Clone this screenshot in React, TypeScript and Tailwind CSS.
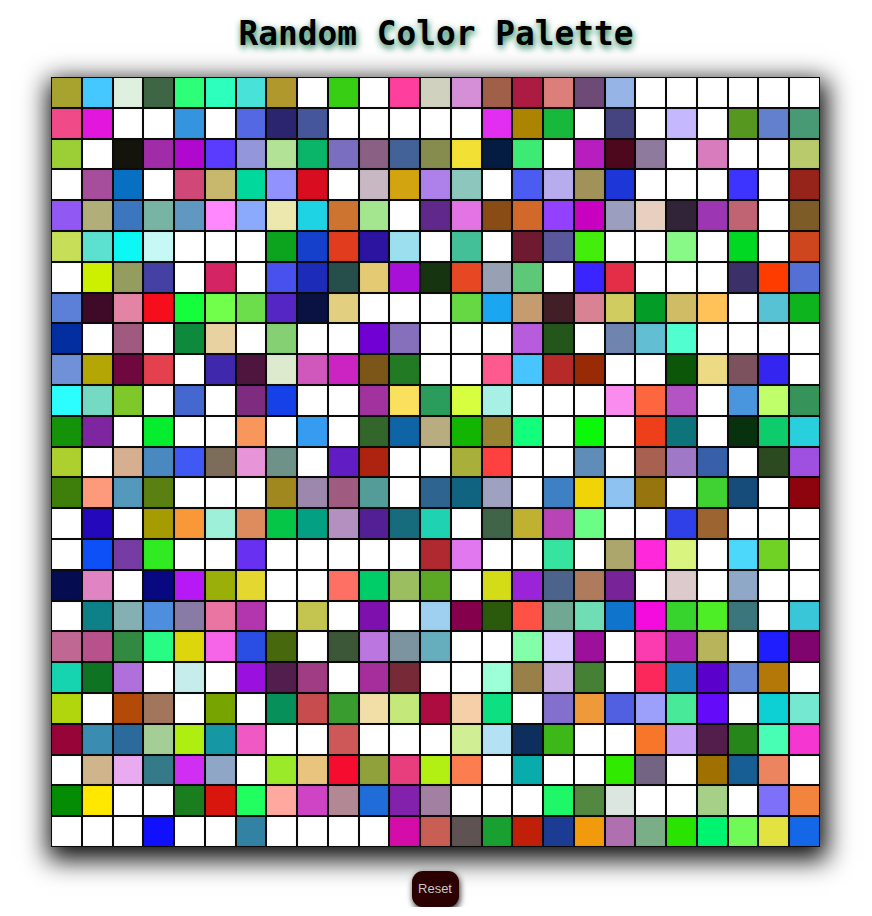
const W = '#ffffff';

const rows: string[][] = [
  ['#a8a32e', '#45c8ff', '#def0de', '#3f6644', '#2eff78', '#2dffbc', '#49e2d8', '#b0982c', W, '#38ce14', W, '#ff3f9e', '#d0d2bf', '#d48fd6', '#a05f48', '#ac1b42', '#dc7e7a', '#6e4a76', '#96b4e6', W, W, W, W, W, W],
  ['#f04a88', '#e316de', W, W, '#3594de', W, '#5568e4', '#2a256e', '#45579a', W, W, W, W, W, '#e22ef0', '#ac8400', '#18b83c', W, '#464480', W, '#c6b8ff', W, '#56981f', '#6280cc', '#489a75'],
  ['#9cce36', W, '#14130c', '#a02ca8', '#b008ce', '#5a3cff', '#9496dc', '#b2e296', '#0ab468', '#7a6ec0', '#8a6084', '#426298', '#868c4e', '#f2e034', '#041c42', '#3cea74', W, '#b81ebe', '#4e081e', '#8e7a9c', W, '#d87cbe', W, W, '#b8ca6c'],
  [W, '#a64e9c', '#0870c2', W, '#d04878', '#c8b86e', '#00d89c', '#9292ff', '#d80d20', W, '#c8b8c4', '#d2a410', '#ae80ea', '#8cc6bc', W, '#4a5cf2', '#b6acee', '#a09258', '#1c36d8', W, W, W, '#3e34ff', W, '#96241a'],
  ['#9258f4', '#b2ae7a', '#3c76be', '#78b4a4', '#6098c2', '#ff88ff', '#8caafc', '#ece8ae', '#1ed4e4', '#cc7430', '#a4e690', W, '#60288a', '#e274e4', '#884c14', '#d2682a', '#9340ff', '#c800c0', '#9c9ec0', '#e8d0c0', '#322438', '#9c36b2', '#c06474', W, '#7e5c28'],
  ['#c6de58', '#5ce0d0', '#0cf8f4', '#c6f8f6', W, W, W, '#0ca41e', '#1440cc', '#e23c1e', '#2c14a0', '#9ce0f0', W, '#44c098', W, '#701a32', '#5a589c', '#44ee0c', W, W, '#88f886', W, '#00d824', W, '#ce461e'],
  [W, '#ccf000', '#949c60', '#4440a4', W, '#d42464', W, '#4850ee', '#1c2cb8', '#264e4a', '#e4ca72', '#a810d8', '#163410', '#e64824', '#98a0b4', '#5cc878', W, '#3a24ff', '#e42e48', W, W, W, '#3c3068', '#ff3c00', '#5470d4'],
  ['#5c80d8', '#3e0a28', '#e484a4', '#f60e1c', '#14fe3c', '#72ff4c', '#6cde4c', '#5426c4', '#0a1244', '#e2d080', W, W, W, '#66d844', '#1aa6f0', '#c49c70', '#421e26', '#d88294', '#d0cc60', '#029c26', '#d0bc64', '#ffc258', W, '#56c2d4', '#0eb41e'],
  ['#022ea0', W, '#a05a80', W, '#0e8a3c', '#e8d2a2', W, '#84d072', W, W, '#7000d4', '#8670bc', W, W, W, '#b85cde', '#24561c', W, '#7084b0', '#62bed2', '#50fed0', W, W, W, W],
  ['#7090d8', '#b4a604', '#6e083e', '#e4404e', W, '#4028ac', '#4e163e', '#deeace', '#d058bc', '#cc24c2', '#7c5618', '#227a24', W, W, '#ff5a90', '#48c4ff', '#b62a2a', '#982a06', W, W, '#0c560a', '#ecda84', '#7c525e', '#3426f0', W],
  ['#2cfeff', '#74dac4', '#7ec82a', W, '#4468d0', W, '#7e2c80', '#1640e8', W, W, '#a2329e', '#fae05c', '#2a9c5c', '#d8fe40', '#a8f0e6', W, W, W, '#fa8cf0', '#fe6640', '#b454c4', W, '#4a96de', '#beff6a', '#36945a'],
  ['#14920a', '#7e26a0', W, '#04ee2e', W, W, '#f8965c', W, '#369cf2', W, '#32662a', '#0e64a4', '#b8ac80', '#12b600', '#988430', '#12fe7c', W, '#0cf80a', W, '#ee3e1a', '#0e747c', W, '#08320e', '#0ccc6c', '#28d0de'],
  ['#aed02e', W, '#d6ae90', '#4a88c0', '#4058f4', '#7c6c5a', '#e894d8', '#6e9288', W, '#621cc4', '#ae2210', W, W, '#a8b03a', '#ff4040', W, W, '#608cb8', W, '#a86050', '#a078c8', '#3860a8', W, '#2c4a20', '#a050e0'],
  ['#3e7e0a', '#fe9a7c', '#5498bc', '#5a8012', W, W, W, '#a0881e', '#9c88ac', '#a05c80', '#549c98', W, '#2e6490', '#106480', '#9ea2c0', W, '#3e80c4', '#f0d408', '#8ec2f0', '#96740e', W, '#40d232', '#164c7a', W, '#8e040e'],
  [W, '#2408bc', W, '#a69c02', '#f89838', '#9ef0d8', '#de8c5e', '#06c648', '#04a084', '#b490c0', '#522094', '#166c7c', '#1ed2b2', W, '#406448', '#c0b230', '#b844b6', '#6afe86', W, W, '#3040e8', '#9c6430', W, W, W],
  [W, '#0e50f8', '#763ca4', '#30ea22', W, W, '#6830f0', W, W, W, W, W, '#b02830', '#e278f0', W, W, '#36e4a0', W, '#aca66c', '#ff28da', '#daf480', W, '#4cd8fa', '#70d224', W],
  ['#060c50', '#e084c4', W, '#080880', '#b618f6', '#9ab008', '#e4d830', W, W, '#ff7064', '#00cc68', '#9abe60', '#5ca824', W, '#d4dc18', '#9c24d8', '#4c648c', '#b07a5c', '#782498', W, '#dccacc', W, '#90a8c8', W, W],
  [W, '#0e8088', '#84b0b4', '#4e8ede', '#887ca6', '#ea74a2', '#b436ae', W, '#c4c450', W, '#7e10ae', W, '#a0d0f0', '#84004c', '#2c5a0c', '#ff5244', '#70a894', '#70deb4', '#0e74cc', '#f40cde', '#36d42c', '#4eee26', '#3a767c', W, '#38c6d8'],
  ['#c06894', '#b8528c', '#328a42', '#28fc84', '#ded60c', '#f664e8', '#2a4ee4', '#48680e', W, '#3c5638', '#bc76e0', '#7c94a0', '#66aebe', W, W, '#82ffa8', '#d8ccff', '#9c109c', W, '#fa3cb0', '#ac26b4', '#b8b45c', W, '#1e1eff', '#80046e'],
  ['#16d4b0', '#0e7424', '#b070dc', W, '#c6ecec', W, '#9a10dc', '#521e4e', '#a03c84', W, '#a62e9c', '#762a38', W, W, '#9cffd8', '#988048', '#ccb4ea', '#468034', W, '#fc285c', '#1880c0', '#5a02cc', '#6484d6', '#b47808', W],
  ['#b2d60e', W, '#b44a08', '#a2765c', W, '#78a400', W, '#08905a', '#c64c4e', '#389c2e', '#f2dfa8', '#c4e87a', '#ac0c40', '#f4cfa8', '#0ce080', W, '#8270cc', '#ee9a3a', '#5060e0', '#9ca0fa', '#48ea9a', '#640cfa', W, '#0cd0d4', '#74e8d0'],
  ['#960438', '#3a8cb0', '#2c6a9e', '#a4ce96', '#aeee10', '#1698a4', '#f058c4', W, W, '#ce5858', W, W, W, '#d0ee94', '#b4e2f4', '#0e2e5e', '#3cb818', W, W, '#f8762a', '#c4a0f6', '#541e4c', '#26861a', '#48feb4', '#f636d0'],
  [W, '#d0b48c', '#eaaaf0', '#347a88', '#d02ef2', '#90a6c6', W, '#9aea2a', '#e8c47e', '#f60c2e', '#90a03a', '#e83e7e', '#b2f014', '#fc7e50', W, '#08acac', W, W, '#30ea00', '#746484', W, '#a07000', '#165e94', '#ec8460', W],
  ['#048c04', '#ffe800', W, W, '#1a7e1e', '#d8160e', '#20fe60', '#fea8a0', '#ce44c4', '#b28894', '#206cd8', '#8222ac', '#a280a2', W, W, W, '#1ef868', '#528840', '#dce6e0', W, W, '#a6d088', W, '#7e70f8', '#f2843e'],
  [W, W, W, '#1010ff', W, W, '#3282a4', W, W, W, W, '#d40ca8', '#c85e54', '#5e5252', '#18a030', '#c0200a', '#1c3c94', '#f09a0c', '#b070b0', '#7aae86', '#28e400', '#00f470', '#70fa58', '#e2e240', '#1468e8'],
];

export default function App() {
  return (
    <div className="flex flex-col items-center bg-white font-['Liberation_Sans',sans-serif]">
      <h1 className="mt-[13px] mb-[22px] font-['DejaVu_Sans_Mono',monospace] text-[32.8px] font-bold leading-[42px] text-black [text-shadow:1px_3px_7px_#127a4e]">
        Random Color Palette
      </h1>
      <div className="mr-px grid w-[769px] grid-cols-[repeat(25,1fr)] shadow-[2px_8px_24px_5px_rgba(0,0,0,0.95)]">
        {rows.flat().map((color, i) => (
          <div
            key={i}
            className="h-[30.8px] border border-[#0a0a0a] shadow-[inset_0_0_2px_rgba(0,0,0,0.1)]"
            style={{ backgroundColor: color }}
          />
        ))}
      </div>
      <button className="mt-[24px] mr-[2px] h-[36px] w-[47px] rounded-[11px] bg-[#2a0000] text-[13px] text-[#c8c8c8] shadow-[1px_3px_6px_rgba(0,0,0,0.85)]">
        Reset
      </button>
    </div>
  );
}
